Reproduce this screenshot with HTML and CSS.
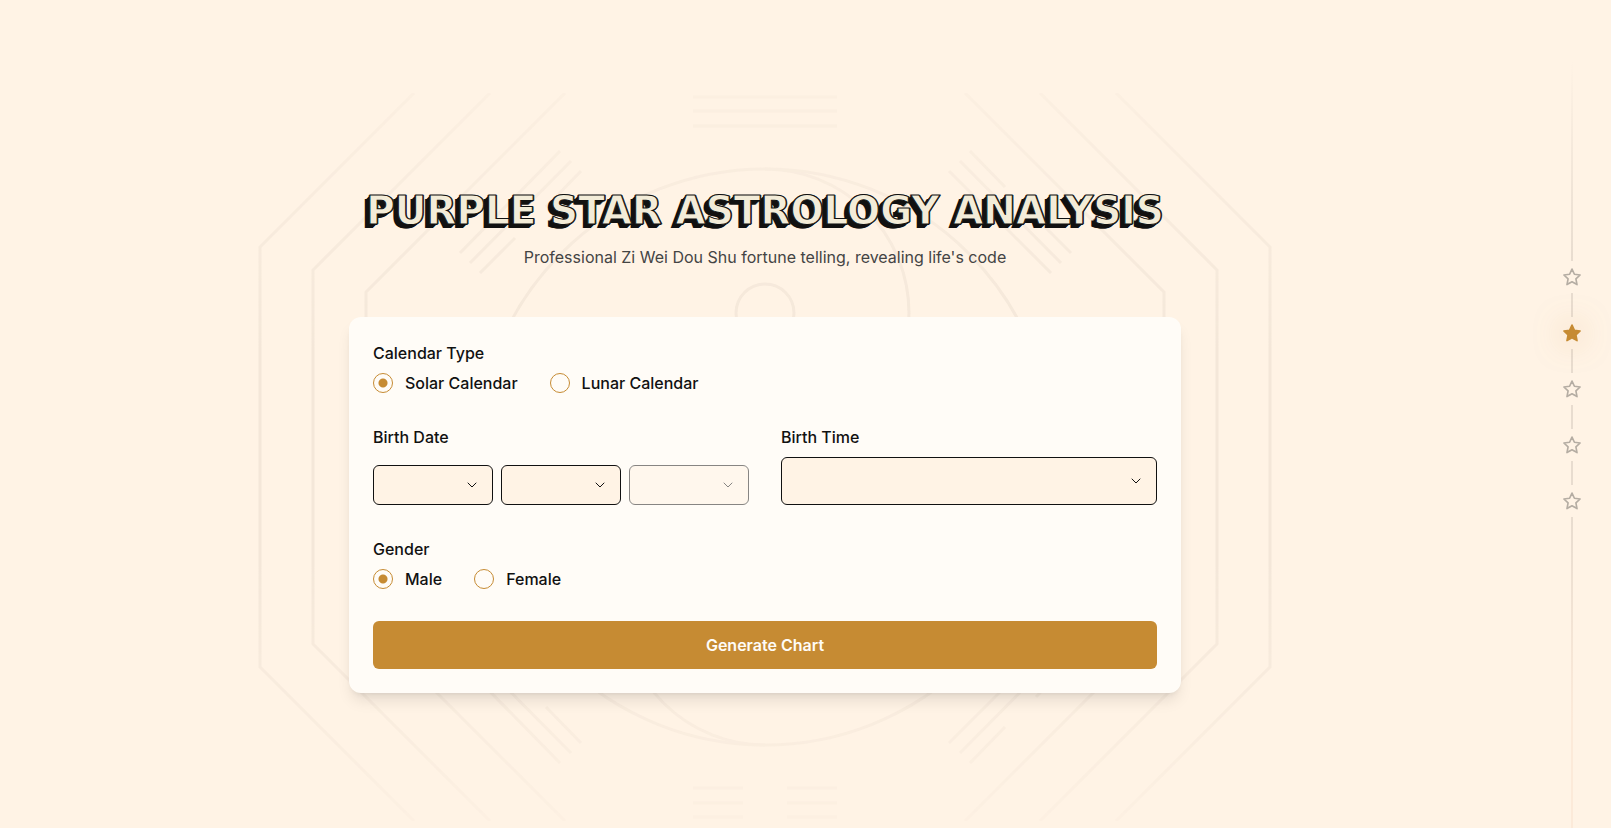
FILE: index.html
```html
<!DOCTYPE html>
<html lang="en">
  <head>
    <meta charset="UTF-8" />
    <meta name="viewport" content="width=device-width, initial-scale=1.0" />
    <title>Purple Star Astrology Analysis</title>
    <link rel="stylesheet" href="styles.css">
  </head>
  <body>
    <main class="main">
      <section class="analysis">
        <!-- bagua background -->
        <svg class="bagua" viewBox="-4 0 1020 728" aria-hidden="true">
          <path d="M155 0 L1 154 V574 L155 728 M857 0 L1011 154 V574 L857 728" />
          <path d="M231 0 L54 177 V551 L231 728 M781 0 L958 177 V551 L781 728" />
          <path d="M306 0 L107 199 V529 L306 728 M706 0 L905 199 V529 L706 728" />
          <circle cx="506" cy="364" r="288" />
          <path d="M506 76 A144 144 0 0 1 506 364 A144 144 0 0 0 506 652" />
          <circle cx="506" cy="220" r="29" />
          <circle cx="506" cy="508" r="29" />
          <path d="M434 4 H578 M434 18 H578 M434 33 H578" />
          <path d="M434 695 H484 M528 695 H578 M434 710 H484 M528 710 H578 M434 724 H484 M528 724 H578" />
          <path d="M301 58 L201 160 M312 68 L211 170 M322 78 L287 114 M256 145 L221 180" />
          <path d="M711 58 L746 94 M776 124 L812 160 M701 68 L802 170 M690 78 L792 180" />
          <path d="M301 670 L201 568 M312 660 L211 558 M322 650 L287 614 M256 583 L221 548" />
          <path d="M711 670 L746 634 M777 604 L812 568 M701 660 L802 558 M690 650 L792 548" />
        </svg>

        <div class="content">
          <h1 class="title">PURPLE STAR ASTROLOGY ANALYSIS</h1>
          <p class="subtitle">Professional Zi Wei Dou Shu fortune telling, revealing life's code</p>

          <form class="card" id="chartForm">
            <fieldset class="field">
              <legend>Calendar Type</legend>
              <div class="radios">
                <label><input type="radio" name="calendar" value="solar" checked />Solar Calendar</label>
                <label><input type="radio" name="calendar" value="lunar" />Lunar Calendar</label>
              </div>
            </fieldset>

            <div class="row">
              <fieldset class="field">
                <legend>Birth Date</legend>
                <div class="selects">
                  <select id="birthYear" aria-label="Year"></select>
                  <select id="birthMonth" aria-label="Month"></select>
                  <select id="birthDay" aria-label="Day" disabled></select>
                </div>
              </fieldset>
              <div class="field">
                <label class="field-label" for="birthTime">Birth Time</label>
                <select class="time-select" id="birthTime"></select>
              </div>
            </div>

            <fieldset class="field">
              <legend>Gender</legend>
              <div class="radios">
                <label><input type="radio" name="gender" value="male" checked />Male</label>
                <label><input type="radio" name="gender" value="female" />Female</label>
              </div>
            </fieldset>

            <button type="submit" class="submit">Generate Chart</button>
          </form>
        </div>
      </section>
    </main>

    <svg width="0" height="0" class="defs" aria-hidden="true">
      <symbol id="star" viewBox="0 0 24 24">
        <path d="M12 2.5 L14.9 8.7 L21.7 9.6 L16.7 14.3 L18 21.1 L12 17.8 L6 21.1 L7.3 14.3 L2.3 9.6 L9.1 8.7 Z" />
      </symbol>
    </svg>
    <nav class="stars" aria-label="Sections">
      <span class="line line-top"></span>
      <a href="#" class="star" aria-label="Section 1"><svg><use href="#star" /></svg></a>
      <span class="line"></span>
      <a href="#" class="star active" aria-label="Section 2"><svg><use href="#star" /></svg></a>
      <span class="line"></span>
      <a href="#" class="star" aria-label="Section 3"><svg><use href="#star" /></svg></a>
      <span class="line"></span>
      <a href="#" class="star" aria-label="Section 4"><svg><use href="#star" /></svg></a>
      <span class="line"></span>
      <a href="#" class="star" aria-label="Section 5"><svg><use href="#star" /></svg></a>
      <span class="line line-bottom"></span>
    </nav>
  </body>
</html>
```
FILE: styles.css
```css
* {
  box-sizing: border-box;
}
body {
  margin: 0;
  min-height: 100vh;
  display: flex;
  background-color: #fff3e5;
  color: #111;
  font-family: Inter, "Liberation Sans", sans-serif;
  font-size: 16px;
  line-height: 24px;
}
.main {
  flex: 1;
  padding-top: 93px;
}
.analysis {
  position: relative;
  padding: 96px 24px 128px;
}
.bagua {
  position: absolute;
  top: 0;
  left: 50%;
  width: 1020px;
  height: 100%;
  transform: translateX(-50%);
  fill: none;
  stroke: #f4e7d9;
  stroke-width: 3;
  -webkit-mask-image: linear-gradient(rgba(0, 0, 0, 0.3), #000 35%, #000 65%, rgba(0, 0, 0, 0.2));
  mask-image: linear-gradient(rgba(0, 0, 0, 0.3), #000 35%, #000 65%, rgba(0, 0, 0, 0.2));
}
.content {
  position: relative;
  max-width: 832px;
  margin: 0 auto;
}
.title {
  margin: 0 0 12px;
  font-family: "DejaVu Sans", sans-serif;
  font-size: 39px;
  line-height: 44px;
  font-weight: 700;
  text-align: center;
  white-space: nowrap;
  color: #f3ecd8;
  -webkit-text-stroke: 1px #111;
  text-shadow: 1px 0 #111, 0 1px #111, -1px 0 #111, -1px 1px #111,
    -2px 2px #111, -3px 3px #111, -4px 4px #111, -5px 4px #111;
}
.subtitle {
  margin: 0 0 48px;
  text-align: center;
  color: #444;
}
.card {
  display: flex;
  flex-direction: column;
  gap: 32px;
  padding: 24px;
  background-color: #fffcf7;
  border-radius: 12px;
  box-shadow: 0 10px 15px -3px rgba(0, 0, 0, 0.1),
    0 4px 6px -4px rgba(0, 0, 0, 0.1);
}
.field {
  min-width: 0;
  margin: 0;
  padding: 0;
  border: none;
}
.field legend,
.field-label {
  display: block;
  padding: 0;
  margin-bottom: 8px;
  font-weight: 500;
}
.row {
  display: grid;
  grid-template-columns: 1fr 1fr;
  gap: 32px;
}
.radios {
  display: flex;
  gap: 32px;
}
.radios label {
  display: flex;
  align-items: center;
  gap: 12px;
  line-height: 20px;
  font-weight: 500;
  cursor: pointer;
}
.radios input {
  appearance: none;
  width: 20px;
  height: 20px;
  margin: 0;
  border: 1px solid #c68b33;
  border-radius: 50%;
}
.radios input:checked {
  background: radial-gradient(circle, #c68b33 4px, transparent 5px);
}
.selects {
  display: grid;
  grid-template-columns: repeat(3, 1fr);
  gap: 8px;
  padding-top: 8px;
}
select {
  appearance: none;
  width: 100%;
  height: 40px;
  padding: 0 36px 0 12px;
  border: 1px solid #111;
  border-radius: 6px;
  background: #fff3e5 url("data:image/svg+xml,%3Csvg xmlns='http://www.w3.org/2000/svg' width='16' height='16' fill='none' stroke='%23111' stroke-linecap='round' stroke-linejoin='round'%3E%3Cpath d='M4 6l4 4 4-4'/%3E%3C/svg%3E") no-repeat right 12px center;
  font: inherit;
}
select:disabled {
  opacity: 0.5;
}
.time-select {
  height: 48px;
}
.submit {
  height: 48px;
  border: none;
  border-radius: 6px;
  background-color: #c68b33;
  color: #fffcf7;
  font: inherit;
  font-weight: 600;
  cursor: pointer;
}
.submit:hover {
  background-color: #b57c28;
}
.defs {
  position: absolute;
}
.stars {
  display: flex;
  flex-direction: column;
  align-items: center;
  width: 81px;
  padding-left: 3px;
}
.line {
  width: 2px;
  height: 24px;
  background-color: #e8dccf;
}
.line-top {
  height: 261px;
  background: linear-gradient(transparent 61px, #e8dccf);
}
.line-bottom {
  flex: 1;
  background: linear-gradient(#e8dccf, #fcead9 200px);
}
.star {
  display: flex;
  align-items: center;
  justify-content: center;
  width: 32px;
  height: 32px;
}
.star svg {
  width: 20px;
  height: 20px;
  fill: none;
  stroke: #b5ada3;
  stroke-width: 2;
  stroke-linejoin: round;
  overflow: visible;
}
.star.active svg {
  fill: #c68b33;
  stroke: #c68b33;
  filter: drop-shadow(0 0 15px rgba(198, 139, 51, 0.5));
}
```
